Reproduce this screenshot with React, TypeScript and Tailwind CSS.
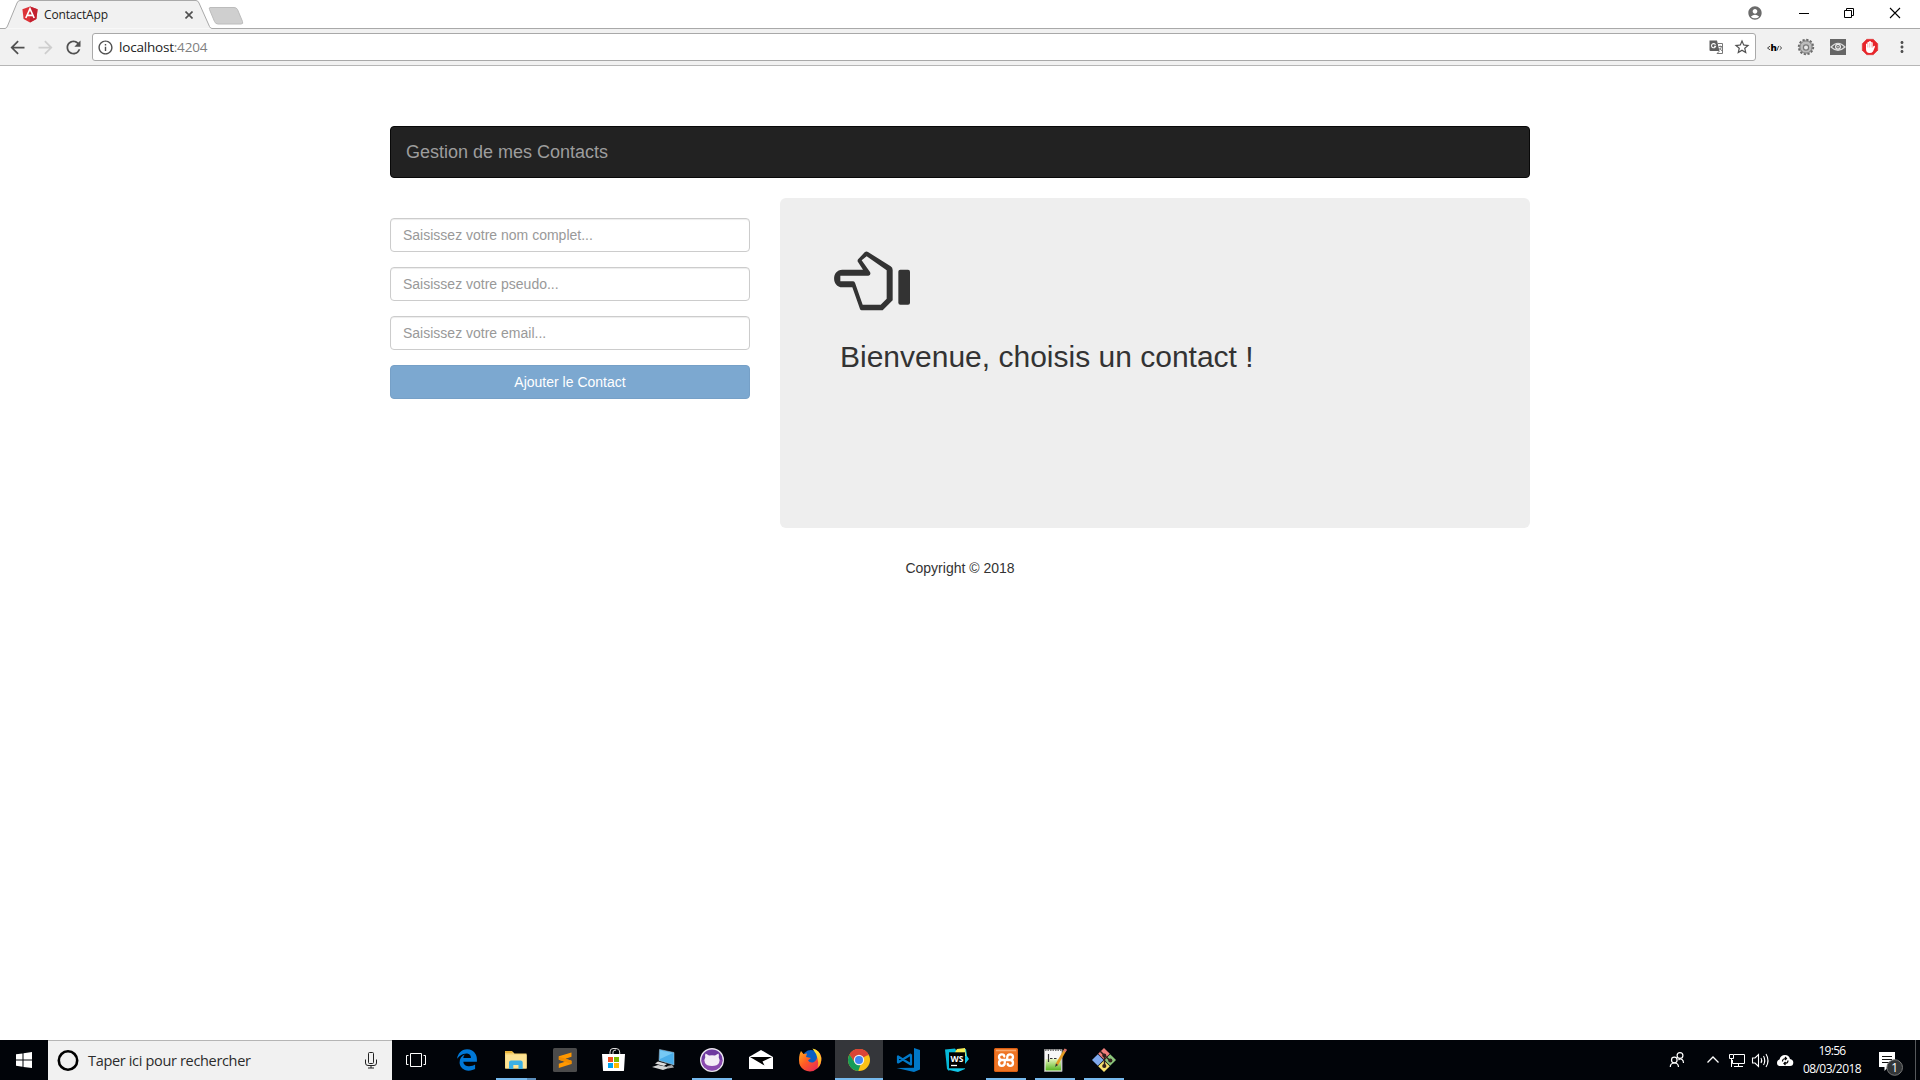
import type { ReactNode } from 'react';
import {
  MdAccountCircle,
  MdArrowBack,
  MdArrowForward,
  MdInfoOutline,
  MdMoreVert,
  MdRefresh,
  MdStarBorder,
} from 'react-icons/md';
import { FaEdgeLegacy } from 'react-icons/fa';

const UI = "font-['Segoe_UI','Open_Sans',sans-serif]";

function TabStrip() {
  return (
    <div className="relative flex h-[29px] items-start bg-white">
      <svg className="absolute left-0 top-0" width="250" height="29" viewBox="0 0 250 29">
        <path d="M0 28.5H5Q6.500 28.500 7.500 26L17 3Q18 .5 20 .5H196Q198 .5 199 3L209.500 26.500Q210.500 28.500 212 28.500H250" fill="#f1f1f1" stroke="#a9a9a9" />
        <path d="M210 7.500H234Q236.500 7.500 237.500 9.500L242.500 21.500Q243.500 24 241 24H218Q215.500 24 214.500 21.500L209.500 9.500Q208.800 7.500 210 7.500Z" fill="#cfcfcf" stroke="#bcbcbc" />
      </svg>
      <div className="relative flex h-[29px] w-[250px] items-center pl-[22px]">
        <svg width="16" height="17" viewBox="0 0 16 17">
          <path d="M8 0.500L15.600 3.200L14.400 13L8 16.500L1.600 13L.4 3.200Z" fill="#dd3338" />
          <path d="M8 .5L15.600 3.200L14.400 13L8 16.500Z" fill="#c3202f" />
          <path d="M3.800 12L8 2.800L12.200 12M5.300 9.400H10.700" fill="none" stroke="#fff" strokeWidth="1.600" />
        </svg>
        <span className={`${UI} ml-[6px] w-[141px] text-[12px] leading-4 tracking-[-0.15px] text-[#222]`}>ContactApp</span>
        <svg width="8" height="8" viewBox="0 0 8 8">
          <path d="M.5 .5L7.500 7.500M7.500 .5L.5 7.500" stroke="#505050" strokeWidth="1.600" />
        </svg>
      </div>
      <div className="flex h-[28px] flex-1 justify-end border-b border-transparent">
        <MdAccountCircle className="mr-[36px] mt-[5px]" size={16} color="#6b6b6b" />
        <svg width="121" height="28" viewBox="1799 0 121 28" fill="none" stroke="#000">
          <path d="M1799 13.500H1809" />
          <path d="M1844.500 10.500H1851.500V17.500H1844.500ZM1846.500 10.500V8.500H1853.500V15.500H1851.500" />
          <path d="M1890 8L1900 18M1900 8L1890 18" strokeWidth="1.100" />
        </svg>
      </div>
      <div className="absolute bottom-0 left-[250px] right-0 h-px bg-[#a9a9a9]" />
    </div>
  );
}

function Extensions() {
  return (
    <svg width="128" height="36" viewBox="1762 29 128 36">
      <text x="1773.600" y="51" textAnchor="middle" fontFamily="Open Sans" fontSize="9.500" fontWeight="800" fill="#000">h</text>
      <path d="M1770 46.200L1767.500 48L1770 49.800M1778.600 46L1777 50.500M1779.700 46.200L1781.700 48L1779.700 49.800" fill="none" stroke="#333" strokeWidth=".9" />
      <circle cx="1806" cy="47" r="7.200" fill="#bdbdbd" stroke="#6a6a6a" strokeWidth="2" strokeDasharray="2.200 1.570" />
      <circle cx="1806" cy="47" r="6" fill="#bcbcbc" stroke="#8a8a8a" strokeWidth="1" />
      <circle cx="1806" cy="47.500" r="2.600" fill="#e8e8e8" stroke="#7a7a7a" strokeWidth="1.200" />
      <rect x="1830" y="39" width="16" height="16" fill="#666" />
      <path d="M1831 47Q1838 39.500 1845 47Q1838 53.500 1831 47Z" fill="none" stroke="#ddd" strokeWidth="1.200" />
      <circle cx="1838" cy="46.700" r="2.400" fill="none" stroke="#eee" strokeWidth="1.200" />
      <circle cx="1838" cy="46.700" r=".8" fill="#eee" />
      <path d="M1866.700 39.300H1873.300L1877.700 43.700V50.300L1873.300 54.700H1866.700L1862.300 50.300V43.700Z" fill="#e8252b" stroke="#d33" strokeWidth=".6" />
      <path d="M1866 44Q1866.700 43 1867.400 44V42.500Q1868.200 41.300 1869 42.300V41.500Q1870 40.300 1871 41.500V42.500Q1872 41.500 1872.700 42.800V48L1873.500 46Q1875 45.300 1875 46.700L1873 51.500Q1872 53 1869.500 53Q1866 53 1866 49Z" fill="#fff" />
      <path d="M1867.700 44V47.500M1869.400 42.800V47.500M1871.200 43V47.500" stroke="#e88" strokeWidth=".5" />
    </svg>
  );
}

function Toolbar() {
  return (
    <div className="flex h-[37px] items-center border-b border-[#b6b6b6] bg-[#f1f1f1]">
      <MdArrowBack className="ml-[7px]" size={21} color="#505050" />
      <MdArrowForward className="ml-[7px]" size={21} color="#cecece" />
      <MdRefresh className="ml-[7px]" size={21} color="#505050" />
      <div className="ml-[8px] flex h-[28px] w-[1664px] items-center rounded-[3px] border border-[#a9a9a9] bg-white">
        <MdInfoOutline className="ml-[4px]" size={17} color="#505050" />
        <span className={`${UI} ml-[5px] flex-1 text-[13.5px] leading-[18px] tracking-[-0.2px] text-[#222]`}>
          localhost<span className="text-[#808080]">:4204</span>
        </span>
        <svg className="mr-[9px]" width="15" height="15" viewBox="0 0 15 15">
          <path d="M.5 .5H8L10.500 11H1.500Q.5 11 .5 10Z" fill="#5f5f5f" />
          <path d="M9 3.500H13.500V13.500H8L10.500 11" fill="#fff" stroke="#777" />
          <path d="M6.500 4.700A2.100 2.100 0 1 0 6.700 6.200H5" fill="none" stroke="#fff" strokeWidth="1.100" />
          <path d="M9.500 6.500H13M11.200 5.500V6.500M12.500 6.500Q12 9 10 10.500M10.500 8L13 11" fill="none" stroke="#666" strokeWidth=".8" />
        </svg>
        <MdStarBorder className="mr-[4px]" size={18} color="#505050" />
      </div>
      <div className="ml-[6px]">
        <Extensions />
      </div>
      <MdMoreVert className="ml-[3px]" size={18} color="#505050" />
    </div>
  );
}

function HandLeft() {
  return (
    <svg className="-ml-[6px]" width="76" height="60" viewBox="192 182 228 180" fill="#333">
      <path
        fillRule="evenodd"
        d="M294 185L362 228Q368 232 368 239V330L338 360H275Q271 360 270 356L247 291H217C184 291 184 238 217 238H279L264 215Q261 210 265 206L284 186Q289 181 294 185ZM290 198L275 210L300 245Q304 254 295 256H211V273H248Q253 273 255 277L278 343H332L350 325V240Z"
      />
      <rect x="385" y="238" width="35" height="105" rx="6" />
    </svg>
  );
}

function Field({ placeholder }: { placeholder: string }) {
  return (
    <input
      className="mb-[15px] block h-[34px] w-full rounded-[4px] border border-[#ccc] bg-white px-3 py-[6px] text-[14px] leading-5 shadow-[inset_0_1px_1px_rgba(0,0,0,0.075)] placeholder:text-[#999]"
      placeholder={placeholder}
    />
  );
}

function Page() {
  return (
    <main className="mx-auto w-[1140px] flex-1 pt-[60px] font-['Liberation_Sans',Arial,sans-serif] text-[14px] text-[#333]">
      <nav className="mb-5 flex h-[52px] items-center rounded-[4px] border border-[#080808] bg-[#222] px-[15px] text-[18px] leading-5 text-[#9d9d9d]">
        Gestion de mes Contacts
      </nav>
      <div className="flex gap-[30px]">
        <form className="w-[360px] pt-5">
          <Field placeholder="Saisissez votre nom complet..." />
          <Field placeholder="Saisissez votre pseudo..." />
          <Field placeholder="Saisissez votre email..." />
          <button type="button" className="block h-[34px] w-full rounded-[4px] border border-[#76a0c7] bg-[#7ca8d0] text-[14px] leading-5 text-white">
            Ajouter le Contact
          </button>
        </form>
        <section className="h-[330px] w-[750px] rounded-[6px] bg-[#eee] px-[60px] pt-[53px]">
          <HandLeft />
          <h2 className="mt-[29px] text-[30px] leading-[33px]">Bienvenue, choisis un contact !</h2>
        </section>
      </div>
      <footer className="mt-[30px] text-center leading-5">Copyright © 2018</footer>
    </main>
  );
}

function Slot({ x, w = 48, children, className = '' }: { x: number; w?: number; children: ReactNode; className?: string }) {
  return (
    <svg className={`shrink-0 ${className}`} width={w} height="40" viewBox={`${x} 0 ${w} 40`} fill="none">
      {children}
    </svg>
  );
}

const RUN = '#76b9ed';

function Apps() {
  return (
    <div className="ml-[3px] flex gap-px">
      <div className="flex h-10 w-12 items-center justify-center">
        <FaEdgeLegacy size={22} color="#0078d7" />
      </div>
      <Slot x={492}>
        <path d="M505 12H513L514.500 13.500H526.500V28.500H505Z" fill="#f5d06c" />
        <path d="M505 11H512.500V13H505Z" fill="#e8b339" />
        <path d="M505.500 14.500H526.700V28.500H505.500Z" fill="#fde394" />
        <path d="M509 29V22.500Q509 20.500 511 20.500H520.500Q522.700 20.500 522.700 22.500V29H518.500V25H513.300V29Z" fill="#3bb0e5" />
        <path d="M496 38H527V40H496Z" fill={RUN} />
        <path d="M527 38H536V40H527Z" fill="#5a8dbb" />
      </Slot>
      <Slot x={541}>
        <rect x="553" y="8" width="24" height="24" rx="1.500" fill="#4b4b4b" />
        <path d="M571.500 12.500V16.800L565.500 18.800L571.500 20.800V24L558.800 28V23.700L565 21.700L558.800 19.700V16.300Z" fill="#ff9800" />
        <path d="M558.800 16.500L571.500 20.800V24L558.800 19.700Z" fill="#f08c00" />
      </Slot>
      <Slot x={590}>
        <path d="M610 15V12Q610 8.500 613 8.500H616Q619.700 8.500 619.700 12V15M613 15V12Q613 10 616 10" stroke="#ddd" strokeWidth="1" />
        <path d="M602 14H625L624 30.500Q623.900 31 623 31H604Q603.100 31 603 30.500Z" fill="#fff" />
        <path d="M608 17H613V22H608Z" fill="#f25022" />
        <path d="M614 17H619V22H614Z" fill="#7fba00" />
        <path d="M608 23H613V28H608Z" fill="#00a4ef" />
        <path d="M614 23H619V28H614Z" fill="#ffb900" />
      </Slot>
      <Slot x={639}>
        <path d="M659.500 9.500L674 12.500V25L659 20.500Z" fill="#4aaeea" stroke="#b9cfdc" strokeWidth=".5" />
        <path d="M660 10.500L673 13L660 19Z" fill="#76c9f5" />
        <path d="M658 21.500L667 24L664 26L655 23.500Z" fill="#dcdcdc" />
        <path d="M652 27L658 25L670 27.500L663 30Z" fill="#d2d4d5" />
        <path d="M667 26L672 25L674 27.500L668 28.500Z" fill="#aaa" />
      </Slot>
      <Slot x={688}>
        <circle cx="712" cy="20" r="11.300" fill="#6f3aa0" stroke="#e8e3ed" strokeWidth="1.400" />
        <path d="M701.500 20A10.500 10.500 0 0 0 722.500 20Z" fill="#8b4aaf" />
        <path d="M705.500 13.500L709 15.500Q712 14.800 715 15.500L718.500 13.500Q719.300 15.500 718.700 17.300Q720.500 20 719 23Q717.500 26 712 26Q706.500 26 705 23Q703.500 20 705.300 17.300Q704.700 15.500 705.500 13.500Z" fill="#f4edf6" />
        <path d="M692 38H732V40H692Z" fill={RUN} />
      </Slot>
      <Slot x={737}>
        <path d="M749 17L761 10L773 17V29H749Z" fill="#fff" />
        <path d="M750 17H772L762.500 21.500L764.500 25.500Z" fill="#000" />
      </Slot>
      <Slot x={786}>
        <defs>
          <linearGradient id="fox" x1="0" y1="0" x2="1" y2="1">
            <stop offset="0" stopColor="#ffb61e" />
            <stop offset=".45" stopColor="#ff5a25" />
            <stop offset="1" stopColor="#e21b65" />
          </linearGradient>
          <linearGradient id="tail" x1="0" y1="0" x2="0" y2="1">
            <stop offset="0" stopColor="#ffef3e" />
            <stop offset="1" stopColor="#ff9a17" />
          </linearGradient>
        </defs>
        <circle cx="811" cy="18.500" r="8.500" fill="#0a5fc4" />
        <path d="M801 11L803.500 14L807 13.500L806 17L811 18L808 20.500Q810 23.500 814 22Q818 19 817 14L814 9Q820 11 821.300 17Q822 24 818 28Q813 32.500 807 31Q801 29.500 799.300 23.500Q798.300 16 801 11Z" fill="url(#fox)" />
        <path d="M812.500 8.500Q820 10 821.300 18Q821.500 24.500 817.500 28Q819 23 817.500 18.500Q816.500 13.500 812.500 8.500Z" fill="url(#tail)" />
      </Slot>
      <Slot x={835} className="bg-[#34363a]">
        <circle cx="859" cy="20" r="11" fill="#fbc116" />
        <path d="M859 20L849.470 14.500A11 11 0 0 1 868.530 14.500Z" fill="#db4437" />
        <path d="M859 9A11 11 0 0 1 868.900 15.200H859A4.800 4.800 0 0 0 854.800 22.400L849.470 14.500A11 11 0 0 1 859 9Z" fill="#db4437" />
        <path d="M849.470 14.500L854.800 22.400Q857 25 860.500 24.700L858.300 31A11 11 0 0 1 849.470 14.500Z" fill="#159c58" />
        <circle cx="859" cy="20" r="5.200" fill="#f1f1f1" />
        <circle cx="859" cy="20" r="4" fill="#4285f4" />
        <path d="M835 38H883V40H835Z" fill={RUN} />
      </Slot>
      <Slot x={884}>
        <path d="M914 8L920 10V29.500L914 32L896.500 28L914 27.800Z" fill="#0078c8" />
        <path d="M911 14.200V24.500L898 16.500V22.500L911 14.200" stroke="#0078c8" strokeWidth="2.200" strokeLinejoin="round" />
      </Slot>
      <Slot x={933}>
        <path d="M945 9.500L955 8.500L958 13L949 31L947 29Z" fill="#07b9d8" />
        <path d="M956 11L966 9L967 16L969 19L965 24V29L958 32L949 30L950 20Z" fill="#12c7e8" />
        <path d="M957 9L965 8L966 16L954 14Z" fill="#f5ed57" />
        <rect x="949" y="12.300" width="16" height="16" fill="#000" />
        <text x="957" y="21.500" textAnchor="middle" textLength="13" fontFamily="Open Sans" fontSize="8.500" fontWeight="700" fill="#fff">WS</text>
        <path d="M951 25.500H957" stroke="#fff" strokeWidth="1.300" />
      </Slot>
      <Slot x={982}>
        <rect x="994" y="8" width="24" height="24" rx="2" fill="#ee7424" />
        <rect x="994.500" y="8.500" width="23" height="23" rx="1.500" stroke="#d95d11" />
        <path d="M996 10.500H1016" stroke="#f9a86b" strokeWidth="1.500" />
        <path d="M1004.300 16.500Q1004.300 14.300 1001.800 14.300Q999 14.300 999 17Q999 19.500 1001.500 20Q999 20.500 999 23Q999 25.800 1001.800 25.800Q1004.800 25.800 1004.800 22.500V20M1001.500 20H1010M1007.200 20V17.500Q1007.200 14.300 1010.200 14.300Q1013 14.300 1013 17Q1013 19.500 1010.500 20Q1013 20.500 1013 23Q1013 25.800 1010.200 25.800Q1007.700 25.800 1007.700 23.800" stroke="#fff" strokeWidth="2.300" strokeLinecap="round" />
        <path d="M986 38H1026V40H986Z" fill={RUN} />
      </Slot>
      <Slot x={1031}>
        <defs>
          <linearGradient id="note" x1="0" y1="0" x2="0" y2="1">
            <stop offset="0" stopColor="#e7f5bf" />
            <stop offset="1" stopColor="#57b51f" />
          </linearGradient>
        </defs>
        <path d="M1044.500 9.500H1062V31.500H1044.500Z" fill="#f7f7f7" stroke="#999" />
        <path d="M1045.500 19H1061V30.500H1045.500Z" fill="url(#note)" />
        <path d="M1045 10H1061.500" stroke="#777" strokeWidth="2" strokeDasharray="1.500 1" />
        <path d="M1048.500 14V22M1050 18.500H1052.500M1054 18.500H1056.500" stroke="#333" strokeWidth="1.200" />
        <path d="M1065.500 9.500L1056.500 25" stroke="#e49b22" strokeWidth="2.600" />
        <path d="M1065.800 9L1064.500 11.500" stroke="#d76e6e" strokeWidth="2.600" />
        <path d="M1055 27L1056 23.500L1058 25Z" fill="#333" />
        <path d="M1035 38H1075V40H1035Z" fill={RUN} />
      </Slot>
      <Slot x={1080}>
        <path d="M1104 8L1109.800 13.800L1104 19.600L1098.200 13.800Z" fill="#ef7e7b" />
        <path d="M1097.800 14.200L1103.600 20L1097.800 25.800L1092 20Z" fill="#7fa9ed" />
        <path d="M1104 20.400L1109.800 26.200L1104 32L1098.200 26.200Z" fill="#f7e06f" />
        <path d="M1110.200 14.200L1116 20L1110.200 25.800L1104.400 20Z" fill="#8bc57b" />
        <path d="M1100 11L1104.500 15.500V26M1104.500 15.500L1110 20.500" stroke="#31201d" strokeWidth="1.500" />
        <circle cx="1104.300" cy="15.500" r="2" fill="#31201d" />
        <circle cx="1104.300" cy="26" r="2.100" fill="#31201d" />
        <circle cx="1110.300" cy="20.500" r="2.100" fill="#31201d" />
        <path d="M1084 38H1124V40H1084Z" fill={RUN} />
      </Slot>
    </div>
  );
}

function Tray() {
  return (
    <div className="ml-auto flex">
      <Slot x={1665} w={36}>
        <g stroke="#fff" strokeWidth="1.200">
          <circle cx="1674.300" cy="20" r="2.800" />
          <path d="M1670.300 27Q1670.300 23 1674.500 23Q1678.300 23 1678.500 27" />
          <circle cx="1680" cy="15.500" r="2.900" />
          <path d="M1678.500 20Q1680 18.300 1682 19.500Q1683.500 20.500 1683.500 23" />
        </g>
      </Slot>
      <Slot x={1701} w={24}>
        <path d="M1707.500 22.500L1713 17L1718.500 22.500" stroke="#fff" strokeWidth="1.300" />
      </Slot>
      <Slot x={1725} w={24}>
        <path d="M1734 14.500H1744.500V23.500H1732.500V20M1738.500 23.500V26.500M1734 26.500H1743M1729.500 14.500H1733.500V18.500H1729.500ZM1731.500 18.500V27" stroke="#fff" />
      </Slot>
      <Slot x={1749} w={24}>
        <path d="M1752.500 18H1755L1758.500 14.500V26.500L1755 23H1752.500ZM1761 18Q1762.500 20.500 1761 23M1763.500 16Q1766 20.500 1763.500 25M1766 14Q1770 20.500 1766 27" stroke="#fff" strokeWidth="1.100" />
      </Slot>
      <Slot x={1773} w={24}>
        <path d="M1780 26Q1777 26 1777 23Q1777 20 1779.500 19.500Q1780.500 15 1785 15Q1789 15 1790 19Q1793.300 19.500 1793.300 22.500Q1793.300 26 1790 26Z" fill="#fff" />
        <path d="M1782.500 21.500Q1782.500 18.500 1786 18.500M1785 17L1786.500 18.500L1785 20M1788 20.500Q1788 23.500 1784.500 23.500M1785.500 22L1784 23.500L1785.500 25" stroke="#000" strokeWidth="1.200" />
      </Slot>
      <div className={`${UI} flex w-[70px] flex-col items-center pt-[2px] text-[12px] leading-[17.5px] tracking-[-0.7px] text-white`}>
        <span>19:56</span>
        <span className="tracking-[-0.55px]">08/03/2018</span>
      </div>
      <Slot x={1867}>
        <path d="M1879 12H1895V27H1888L1884.500 31V27H1879Z" fill="#fff" />
        <path d="M1882 16.500H1892M1882 19.500H1892M1882 22.500H1892" stroke="#111" />
        <circle cx="1894.700" cy="27.500" r="7.800" fill="#333638" stroke="#777" />
        <text x="1894.700" y="31.500" textAnchor="middle" fontFamily="Open Sans" fontSize="12" fill="#fff">1</text>
      </Slot>
      <div className="mr-1 h-10 w-px bg-[#55585b]" />
    </div>
  );
}

function Taskbar() {
  return (
    <div className="flex h-10 bg-[#010409]">
      <Slot x={0}>
        <path d="M16 14.300L22.500 13.400V19.500H16ZM23.500 13.200L32 12V19.500H23.500ZM16 20.500H22.500V26.700L16 25.800ZM23.500 20.500H32V28L23.500 26.900Z" fill="#fff" />
      </Slot>
      <div className="flex h-10 w-[344px] items-center border-t border-[#b5b5b5] bg-[#f1f1f1]">
        <svg className="ml-[9px]" width="22" height="22" viewBox="0 0 22 22">
          <circle cx="11" cy="10.500" r="9.200" fill="none" stroke="#000" strokeWidth="2.600" />
        </svg>
        <span className={`${UI} ml-[9px] flex-1 whitespace-nowrap text-[14.5px] leading-5 tracking-[-0.33px] text-[#2b2b2b]`}>Taper ici pour rechercher</span>
        <svg className="mr-[15px]" width="12" height="17" viewBox="0 0 12 17" fill="none" stroke="#222">
          <rect x="3.500" y=".5" width="5" height="11" rx="1" />
          <path d="M.5 7.500V11Q.5 13.500 3 13.500H9Q11.500 13.500 11.500 11V7.500M6 13.500V16M3 16H9" />
        </svg>
      </div>
      <Slot x={392}>
        <path d="M410.500 13.500H421.500V26.500H410.500ZM408.500 15.500H406.500V24.500H408.500M423.500 15.500H425.500V24.500H423.500" stroke="#fff" />
      </Slot>
      <Apps />
      <Tray />
    </div>
  );
}

export default function App() {
  return (
    <div className="flex h-screen w-full flex-col overflow-hidden bg-white">
      <TabStrip />
      <Toolbar />
      <Page />
      <Taskbar />
    </div>
  );
}
